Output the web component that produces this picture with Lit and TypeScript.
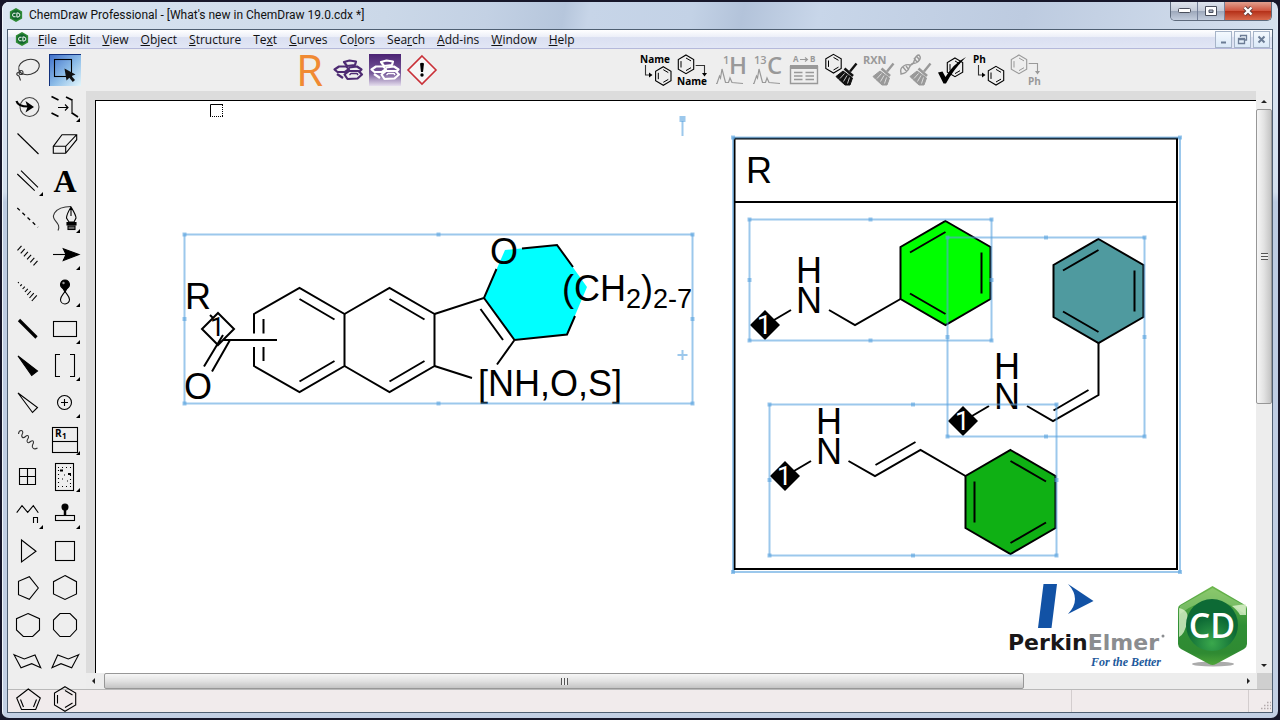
import { LitElement, html, svg, css } from "lit";
import { customElement, property } from "lit/decorators.js";

type Pt = [number, number];

const MENUS: [string, string, string][] = [
  ["", "F", "ile"], ["", "E", "dit"], ["", "V", "iew"], ["", "O", "bject"],
  ["", "S", "tructure"], ["Te", "x", "t"], ["", "C", "urves"], ["Co", "l", "ors"],
  ["Sea", "r", "ch"], ["", "A", "dd-ins"], ["", "W", "indow"], ["", "H", "elp"],
];

const poly = (points: string) => svg`<polygon points=${points} fill="none"/>`;
const line = (points: string) => svg`<polyline points=${points} fill="none"/>`;
const corner = svg`<path d="M31 27v4h-4z" fill="#000" stroke="none"/>`;

const miniRing = (x: number, y: number) => svg`
  <g transform="translate(${x} ${y})" fill="none">
    <path d="M0-9.3L7.7-4.8V4.8L0 9.3L-7.7 4.8V-4.8Z"/>
    <path d="M-5-3.2V3.2M0-6.3L5-3.4M0 6.3L5 3.4" stroke-width="1"/>
  </g>`;

const broom = (c: string) => svg`
  <g stroke=${c} fill="none">
    <path d="M31.500 9.500L25 17.500" stroke-width="2.400"/>
    <path d="M19.500 14.500L28 22" stroke-width="2.600"/>
    <path d="M18 17L11 22.500L14 25.500L20 31L25 31L27.500 24Z" fill=${c} stroke-width="1"/>
    <path d="M19.500 19.500L15 24.500M22 21.500L18.500 27.500M24.500 23.500L22.500 29.500" stroke="#eee" stroke-width=".8"/>
  </g>`;

const hexLogo = (c: string) => svg`
  <g fill="none" stroke=${c} stroke-width="2.200" stroke-linejoin="round">
    <path d="M12 8L17.500 6.500L24 7.500L23 11L15 12Z"/>
    <path d="M2.500 15.500L7 12.500L14 12.500L17 15L13 18L5.500 18Z"/>
    <path d="M17 13.500L25 12.500L29.500 15.500L27 18"/>
    <path d="M12.500 20.500L17 17L26.500 17L30 20.500L25.500 24.500L15.500 25Z"/>
    <path d="M5 20L11 24"/>
    <path d="M17.500 21L19 19.500H25L26 21" stroke-width="1.400"/>
  </g>`;

const peaks = svg`<path d="M2 29.500H3L5.500 22L6.500 24L8 15L11.500 28.500H14.500L16 24L18 28.500L29 29.500" fill="none" stroke="#999" stroke-width="1.200"/>`;

const PALETTE: { name: string; art: unknown; on?: boolean }[] = [
  { name: "Lasso", art: svg`<g fill="none" stroke="#333"><ellipse cx="17" cy="13" rx="10.500" ry="7.500" transform="rotate(-14 17 13)"/><circle cx="9" cy="18.500" r="2"/><path d="M9 18C4 18 3.500 21 7 22L8.500 26.500"/></g>` },
  { name: "Marquee", on: true, art: svg`<rect x="5.500" y="5.500" width="17" height="17" fill="none"/><path d="M15.500 14.500L17.500 26.500L20.300 23.800L23.800 28L26 26L22.500 22L26.500 20.500Z" fill="#111" stroke="none"/>` },
  { name: "Structure perspective", art: svg`<circle cx="17.500" cy="16" r="9.500" fill="none" stroke="#444"/><path d="M4.500 10Q6 15.500 16 15.500" fill="none" stroke-width="2.200"/><path d="M13.500 10L22 16L13.500 21.500L15.500 16Z" stroke="none"/>` },
  { name: "Mass fragmentation", art: svg`<path d="M2.500 5.500L9.500 9M2.500 22L9.500 25.500M17 6L23 9M23 22L29 26" stroke-width="1.700"/><path d="M23 8V23M9 16.500H19M16 13.500L19 16.500L16 19.500" fill="none"/>${corner}` },
  { name: "Solid bond", art: svg`<path d="M5.500 5.500L26.500 26"/>` },
  { name: "Eraser", art: svg`<path d="M4.300 18.300L13 6.700H27.700V11.700L16.700 25.300H4.300ZM4.300 18.300H16.700L27.700 6.700M16.700 18.300V25.300" fill="none"/>` },
  { name: "Multiple bonds", art: svg`<path d="M5.300 9L22.700 25.700M9 5.700L26 22.300"/>${corner}` },
  { name: "Text", art: svg`<text x="16" y="26.500" class="serif" text-anchor="middle">A</text>` },
  { name: "Dashed bond", art: svg`<path d="M5.300 6L26 25.300" stroke-dasharray="3.500 3.500" stroke-width="1.300"/>` },
  { name: "Pen", art: svg`<path d="M9 28.500C13 20 1 19 5.500 11C8.500 6.500 15 4.500 22 4.500" fill="none" stroke="#333"/><path d="M22 5C19 10 17.500 13 17.500 16L20 20H25L27 16C27 13 25 10 22 5ZM22 5V14" fill="#eee"/><path d="M18 20.500H27V23H18Z"/><rect x="19" y="24" width="7" height="3.500" fill="#666"/>${corner}` },
  { name: "Hashed bond", art: svg`${[0, 1, 2, 3, 4, 5].map((i) => svg`<path d="M${5.500 + i * 3.200} ${11.300 + i * 3}l4-4.500"/>`)}` },
  { name: "Arrow", art: svg`<path d="M4 15.500H17"/><path d="M14.300 9.700L30 15.500L14.300 21.500L17 15.500Z"/>${corner}` },
  { name: "Hashed wedge", art: svg`${[0, 1, 2, 3, 4, 5, 6].map((i) => svg`<path d="M${6 + i * 2.300} ${7 + i * 3}l${0.800 + i * 0.700} ${-0.800 - i * 0.800}"/>`)}` },
  { name: "Orbital", art: svg`<circle cx="16" cy="8.500" r="4.500"/><circle cx="14.500" cy="7" r="1.200" fill="#999" stroke="none"/><path d="M14 12.500H18L16 16Z"/><path d="M16 15C15 18 11.500 20 11.500 23.500A4.500 4.500 0 0 0 20.500 23.500C20.500 20 17 18 16 15Z" fill="none"/>${corner}` },
  { name: "Bold bond", art: svg`<path d="M7 7L24.500 24.500" stroke-width="3.200"/>` },
  { name: "Rectangle", art: svg`<rect x="4.500" y="8.500" width="23" height="15" fill="none"/>${corner}` },
  { name: "Bold wedge", art: svg`<path d="M6 6L25.500 21L19.700 25.500Z"/>` },
  { name: "Brackets", art: svg`<path d="M11 4.500H6.500V26.500H11M21 4.500H25.500V26.500H21" fill="none"/>${corner}` },
  { name: "Hollow wedge", art: svg`<path d="M6 6L25.500 20.500L20.500 25.500Z" fill="none"/>` },
  { name: "Charge", art: svg`<circle cx="15.500" cy="15.500" r="7" fill="none"/><path d="M15.500 12V19M12 15.500H19"/>${corner}` },
  { name: "Wavy bond", art: svg`<path d="M6.500 10C7 5 12 6 10.500 9.500C8.500 13 11 15 13.500 12.500C16.500 10 17.500 13 15.500 15.500C14 18 16 20 18.500 17.500C21.500 15.500 22.500 18 20.500 21C19.500 24 22 26 25.500 24" fill="none" stroke="#333"/>` },
  { name: "Table of R groups", art: svg`<rect x="3.500" y="3.500" width="25" height="25" fill="none"/><path d="M3.500 17.500H28.500"/><text x="6" y="13" class="bold10">R</text><text x="13" y="15" class="bold8">1</text>${corner}` },
  { name: "Table", art: svg`<path d="M7.500 7.500H23.500V23.500H7.500ZM15.500 7.500V23.500M7.500 15.500H23.500" fill="none"/>` },
  { name: "TLC plate", art: svg`<rect x="6.500" y="2.500" width="18" height="27" fill="none"/><path d="M9 6.500H23M9 25.500H23M9.500 9V24M21.500 14V24" stroke-dasharray="1 3" fill="none"/><path d="M11 9.500h3M19 13h3" stroke-width="2"/><path d="M13 18h1M18 20h1M15 14h1"/>${corner}` },
  { name: "Acyclic chain", art: svg`${line("4.700,14.700 10,7.700 15.700,14.300 21.300,7.700 26.300,14.700")}<path d="M21.500 25V19.500H25.500V25" fill="none"/>${corner}` },
  { name: "Templates", art: svg`<circle cx="16" cy="9" r="3"/><path d="M16 10V18" stroke-width="2.500"/><rect x="6.500" y="17.500" width="19" height="5" fill="none"/>${corner}` },
  { name: "Cyclopropane ring", art: poly("9.500,5 24,16.300 9.500,27") },
  { name: "Cyclobutane ring", art: svg`<rect x="6.500" y="6.500" width="19" height="19" fill="none"/>` },
  { name: "Cyclopentane ring", art: poly("17.300,4.700 26.300,16 17.300,27.300 6.500,22.700 6.500,9.300") },
  { name: "Cyclohexane ring", art: poly("16,3.500 27.500,9.700 27.500,22 16,27.500 4.500,22 4.500,9.700") },
  { name: "Cycloheptane ring", art: poly("16,4.500 27.500,9.700 27.500,21 20.700,27.500 11.300,27.500 4.500,21 4.500,9.700") },
  { name: "Cyclooctane ring", art: poly("11,4.500 21,4.500 27.500,11 27.500,20.500 21,27.500 11,27.500 4.500,20.500 4.500,11") },
  { name: "Chair", art: poly("2,8.700 12.300,13 23,9 28.700,21.700 19.700,17.700 9,21.700") },
  { name: "Reversed chair", art: poly("29.700,8.700 19.300,13 8.700,9 3,21.700 12,17.700 22.700,21.700") },
  { name: "Cyclopentadiene ring", art: svg`${poly("16.300,6 28.300,15 23.700,26.500 9.500,26.500 4.700,15")}<path d="M8.500 16.500L11.500 24M24.500 16.500L21.500 24"/>` },
  { name: "Benzene ring", art: svg`${poly("16,3.700 26.700,10 26.700,22 16,28.300 5.500,22 5.500,10")}<path d="M8.500 12V20.500M16 7.500L23.500 12M16 24.500L23.500 20"/>` },
];

const ACTIONS: { name: string; art: unknown }[] = [
  { name: "Convert name to structure", art: svg`<text x="0" y="9" class="bold10">Name</text><path d="M5.500 11V21H10" fill="none" stroke="#333"/><path d="M9 18.500L12.500 21L9 23.500Z" stroke="none"/>${miniRing(23.300, 22)}` },
  { name: "Convert structure to name", art: svg`<text x="0" y="31" class="bold10">Name</text>${miniRing(9, 10.300)}<path d="M18.700 11.500H27.500V20" fill="none" stroke="#333"/><path d="M25 19L27.500 22.500L30 19Z" stroke="none"/>` },
  { name: "Predict 1H NMR", art: svg`<text x="9" y="10" class="n12" fill="#999">1</text><text x="15" y="20" class="n24" fill="#999">H</text>${peaks}` },
  { name: "Predict 13C NMR", art: svg`<text x="3" y="10" class="n12" fill="#999">13</text><text x="16" y="20" class="n24" fill="#999">C</text>${peaks}` },
  { name: "Analyze stoichiometry", art: svg`<text x="5" y="8" class="bold8" fill="#999">A</text><text x="22" y="8" class="bold8" fill="#999">B</text><path d="M12 5.500H19M17 3.500L19.500 5.500L17 7.500" fill="none" stroke="#999"/><path d="M2 11H30V15H2Z" fill="#999" stroke="none"/><path d="M2.500 12V29.500H29.500V12M6 18.500H14.500M17.500 18.500H26M6 22H14.500M17.500 22H26M6 25.500H14.500M17.500 25.500H26" fill="none" stroke="#999" stroke-width="1.400"/>` },
  { name: "Clean up structure", art: svg`${miniRing(8.500, 9.700)}${broom("#111")}` },
  { name: "Clean up reaction", art: svg`<text x="1" y="10" class="bold11" fill="#999">RXN</text>${broom("#999")}` },
  { name: "Clean up biopolymer", art: svg`<path d="M2 19C0 12 8 10 11 11C17 11 14 1 20 1C23 4 20 9 14 9.500C9 10 12 19 2 20ZM4 13L8 18M7 12L10 16M15 4L18 8M17.500 2L20.500 6" fill="none" stroke="#999" stroke-width="1.400"/>${broom("#999")}` },
  { name: "Check structure", art: svg`${miniRing(19, 13.300)}<path d="M2 18.500L6.500 17.500L9.500 23Q17 10 30 3Q17 16 10 29.500L7.500 29.500Z" stroke="none"/>` },
  { name: "Expand label", art: svg`<text x="0" y="9" class="bold10">Ph</text><path d="M5.500 11V21H10" fill="none" stroke="#333"/><path d="M9 18.500L12.500 21L9 23.500Z" stroke="none"/>${miniRing(23, 21.700)}` },
  { name: "Contract label", art: svg`<g stroke="#999" fill="#999">${miniRing(9, 10.300)}<path d="M18.700 9.500H27.500V18" fill="none"/><path d="M25 17L27.500 20.500L30 17Z" stroke="none"/><text x="18" y="31" class="bold10">Ph</text></g>` },
];

const GROUPS: { name: string; art: unknown }[] = [
  { name: "Reaxys", art: svg`<text x="1" y="32" class="n44" fill="#f08a33">R</text>` },
  { name: "ChemDraw cloud", art: hexLogo("#4d2a72") },
  { name: "Search cloud", art: svg`<defs><linearGradient id="pg" x1="0" y1="0" x2="0" y2="1"><stop offset="0" stop-color="#4b2373"/><stop offset=".6" stop-color="#76599a"/><stop offset="1" stop-color="#e6dfee"/></linearGradient></defs><rect width="32" height="32" fill="url(#pg)" stroke="none"/>${hexLogo("#fff")}` },
  { name: "Chemical safety", art: svg`<path d="M16 2L30 16L16 30L2 16Z" fill="#f6f6f6" stroke="#c93038" stroke-width="1.600"/><path d="M14 9.500Q16 8 18 9.500L17 18H15Z" stroke="none"/><circle cx="16" cy="21" r="1.700" stroke="none"/>` },
];

const toolCss = css`
  svg { display: block; overflow: visible; }
  .serif { font: bold 32px "Liberation Serif", serif; stroke: none; }
  .bold11 { font: bold 11px "Open Sans", sans-serif; stroke: none; }
  .bold10 { font: bold 10px "Open Sans", sans-serif; stroke: none; }
  .bold8 { font: bold 8px "Open Sans", sans-serif; stroke: none; }
  .n12 { font: 600 11px "Open Sans", sans-serif; stroke: none; }
  .n24 { font: 600 24px "Open Sans", sans-serif; stroke: none; }
  .n44 { font: 44px "Open Sans", sans-serif; stroke: none; }
  .tool {
    width: 32px; height: 32px; flex: none; padding: 0; border: 0;
    background: none; display: block;
  }
  .tool.on {
    background: linear-gradient(to bottom right, #3c6cc8, #8dbde8 55%, #e4f6fb);
    box-shadow: inset 1px 1px 0 #10307c;
  }
`;

const toolButton = (t: { name: string; art: unknown; on?: boolean }) => html`
  <button class="tool ${t.on ? "on" : ""}" aria-label=${t.name}>
    <svg width="32" height="32" viewBox="0 0 32 32" stroke="#000" stroke-width="1.1">${t.art}</svg>
  </button>`;

@customElement("tool-palette")
export class ToolPalette extends LitElement {
  static styles = [toolCss, css`
    :host {
      display: grid; grid-template-columns: 32px 32px; grid-auto-rows: 32px;
      gap: 5px; padding: 5px 5px 0 4px; overflow: hidden;
      background: linear-gradient(to top, #f1ebec 22px, #b9b9b9 22px, #b9b9b9 23px, #eee 23px);
    }
  `];
  render() {
    return html`${PALETTE.map(toolButton)}`;
  }
}

@customElement("action-bar")
export class ActionBar extends LitElement {
  static styles = [toolCss, css`
    :host { display: flex; align-items: center; padding: 0 16px 0 209px; height: 42px; background: #eee; }
    .set { display: flex; gap: 5px; }
    .set + .set { margin-left: 202px; }
  `];
  render() {
    return html`
      <div class="set">${GROUPS.map(toolButton)}</div>
      <div class="set">${ACTIONS.map(toolButton)}</div>`;
  }
}

@customElement("scroll-strip")
export class ScrollStrip extends LitElement {
  @property({ type: Boolean, reflect: true }) horizontal = false;
  @property({ type: Number }) share = 0.5;
  static styles = css`
    :host { display: flex; flex-direction: column; width: 16px; background: #ededed; }
    :host([horizontal]) { flex-direction: row; width: auto; height: 16px; }
    .end { width: 16px; height: 18px; padding: 0; border: 0; background: none; flex: none; }
    :host([horizontal]) .end { width: 18px; height: 16px; }
    .end svg { display: block; }
    .track { flex: 1; display: flex; flex-direction: column; }
    :host([horizontal]) .track { flex-direction: row; }
    .thumb {
      box-sizing: border-box; border: 1px solid #979797; border-radius: 2px;
      background: linear-gradient(to right, #f6f6f6, #e2e2e2 50%, #c4c4c4);
      display: flex; align-items: center; justify-content: center;
    }
    :host([horizontal]) .thumb { background: linear-gradient(#f6f6f6, #e2e2e2 50%, #c4c4c4); }
    .grip { width: 7px; height: 7px; background: repeating-linear-gradient(#555 0 1px, #eee 1px 3px); }
    :host([horizontal]) .grip { background: repeating-linear-gradient(to right, #555 0 1px, #eee 1px 3px); }
  `;
  render() {
    const a = this.horizontal ? "M9 5v6L6 8z" : "M5 11h6L8 8z";
    const b = this.horizontal ? "M8 5v6L11 8z" : "M5 8h6L8 11z";
    return html`
      <button class="end" aria-label="Scroll back"><svg width="16" height="16"><path d=${a} fill="#222"/></svg></button>
      <div class="track"><div class="thumb" style="flex-basis:${this.share * 100}%"><div class="grip"></div></div></div>
      <button class="end" aria-label="Scroll forward"><svg width="16" height="16"><path d=${b} fill="#222"/></svg></button>`;
  }
}

const frame = (x1: number, y1: number, x2: number, y2: number) => {
  const mx = (x1 + x2) / 2;
  const my = (y1 + y2) / 2;
  const spots: Pt[] = [[x1, y1], [mx, y1], [x2, y1], [x1, my], [x2, my], [x1, y2], [mx, y2], [x2, y2]];
  return svg`<g class="sel"><rect x=${x1} y=${y1} width=${x2 - x1} height=${y2 - y1}/>
    ${spots.map(([x, y]) => svg`<rect class="knob" x=${x - 2} y=${y - 2} width="4" height="4"/>`)}</g>`;
};

const hexagon = (cx: number, cy: number, fill: string, inner: string) => svg`
  <g transform="translate(${cx} ${cy})">
    <path d="M0-52L45-26V26L0 52L-45 26V-26Z" fill=${fill}/>
    <path d=${inner}/>
  </g>`;

const attach = (x: number, y: number) => svg`
  <path d="M${x + 9} ${y - 5}L${x + 26} ${y - 15}"/>
  <path d="M${x} ${y - 15}l15 15l-15 15l-15-15z" fill="#000" stroke="none"/>
  <text x=${x - 8} y=${y + 9} class="locant" fill="#fff">1</text>
  <text x=${x + 31} y=${y - 12} class="atom">N</text>
  <text x=${x + 31} y=${y - 42} class="atom">H</text>`;

@customElement("drawing-sheet")
export class DrawingSheet extends LitElement {
  static styles = css`
    :host { display: block; overflow: hidden; background: #fff; }
    svg { display: block; }
    .ink { stroke: #000; stroke-width: 2; fill: none; }
    .atom { font: 36px "Liberation Sans", sans-serif; stroke: none; fill: #000; }
    .sub { font: 27px "Liberation Sans", sans-serif; stroke: none; }
    .locant { font: 26px "Roboto", sans-serif; stroke: none; }
    .sel { fill: none; stroke: #5aa3e0; stroke-opacity: 0.6; stroke-width: 2; }
    .knob { fill: #5aa3e0; fill-opacity: 0.6; stroke: none; }
    .brand { font: bold 22px "DejaVu Sans", sans-serif; }
    .motto { font: italic bold 12px "Liberation Serif", serif; }
    .cd { font: 600 34px "Open Sans", sans-serif; }
  `;
  render() {
    const left = "M-35.500-20.500L0-41M36-20.500V20.500M-35.500 20.500L0 41";
    const right = "M-36-20.500V20.500M0-41L35.500-20.500M0 41L35.500 20.500";
    return html`
      <svg width="1160" height="572" viewBox="96 101 1160 572" role="img" aria-label="Markush structure with R group table">
        <defs>
          <linearGradient id="gem" x1="0" y1="0" x2="0" y2="1">
            <stop offset="0" stop-color="#6fb84e"/><stop offset=".5" stop-color="#2f8f35"/><stop offset=".85" stop-color="#2f8a32"/><stop offset="1" stop-color="#4fa53a"/>
          </linearGradient>
          <radialGradient id="disc" cy=".85"><stop offset="0" stop-color="#3aa84c"/><stop offset="1" stop-color="#0d6a35"/></radialGradient>
        </defs>
        <path d="M223 104.500H210.500V117" fill="none" stroke="#000"/>
        <path d="M210 116.500H223M222.500 105V117" fill="none" stroke="#000" stroke-dasharray="1 1"/>

        <g class="ink">
          <path d="M505 250L557 245L587 287L567 334.500L514.500 340L484 298Z" fill="#0ff" stroke="none"/>
          <path d="M254 333.500V314L299.500 288L344.500 314V366L299.500 392L254 366V347M263.500 319V333.500M263.500 347V361M299.500 299L334.500 319.500M299.500 381.500L334.500 361"/>
          <path d="M344.500 314L389.500 288L434.500 314V366L389.500 392L344.500 366M389.500 299L424.500 319.500M389.500 381.500L424.500 361"/>
          <path d="M434.500 314L484 298L496.500 269M522 248.500L557 245L573 267M575 316L567 334.500L514.500 340L484 298M480.500 309L503 340M514.500 340L497 364.500M434.500 366L472 378"/>
          <path d="M277 340H223M218 313L234 329L218 345L202 329ZM210 315L213 318M223 335L204 366.500M230 340L212 371.500"/>
          <text x="185" y="309" class="atom">R</text>
          <text x="184" y="399" class="atom">O</text>
          <text x="210" y="336" class="locant" fill="#000">1</text>
          <text x="490" y="264" class="atom">O</text>
          <text x="478" y="396" class="atom">[NH,O,S]</text>
          <text x="562" y="301" class="atom">(CH<tspan class="sub" dy="7">2</tspan><tspan dy="-7">)</tspan><tspan class="sub" dy="7">2-7</tspan></text>
        </g>

        <g class="ink">
          <path d="M734.500 138.500H1177V569H734.500ZM734.500 202H1177"/>
          <text x="746" y="183" class="atom">R</text>
          ${hexagon(945.5, 273, "#0f0", left)}
          <path d="M900.500 299L855 325L829 310"/>
          ${attach(765, 325)}
          ${hexagon(1098.5, 291, "#4f9a9f", left)}
          <path d="M1098.500 343V395L1053 421L1027 406M1088.500 390L1053.500 410.500"/>
          ${attach(963, 421)}
          ${hexagon(1010.5, 502, "#0fb014", right)}
          <path d="M965.500 476L920.500 450L875 476L848.500 461M915.500 442L875.500 465"/>
          ${attach(785, 476)}
        </g>

        ${frame(184.5, 234.5, 692.5, 403.5)}
        ${frame(749.5, 219.5, 991.5, 340.5)}
        ${frame(947.5, 237.5, 1144.5, 436.5)}
        ${frame(769.5, 404.5, 1056.5, 555.5)}
        <g class="sel">
          <rect x="733" y="137.500" width="447" height="434.500"/>
          <path d="M682.500 350V360M677.500 355H687.500M682.500 121V136"/>
          <path class="knob" d="M679.500 116h6v6h-6zM731 135.500h4v4h-4zM1178 135.500h4v4h-4zM731 570h4v4h-4zM1178 570h4v4h-4z"/>
        </g>

        <g fill="#1252a5">
          <path d="M1043.500 584H1057L1051.500 628H1038Z"/>
          <path d="M1068 584L1093.500 601L1068 614Q1082 599 1068 584Z"/>
        </g>
        <text x="1008" y="650" class="brand" fill="#1a1718">Perkin<tspan fill="#8b8d90">Elmer</tspan></text>
        <circle cx="1163" cy="636" r="1.500" fill="#8b8d90"/>
        <text x="1091" y="666" class="motto" fill="#1d5a9c">For the Better</text>

        <ellipse cx="1213" cy="664" rx="21" ry="2.500" fill="#888" opacity=".7"/>
        <path d="M1212.500 586L1245 605Q1247 606 1247 609V644Q1247 647 1244 649L1216 664Q1212.500 666 1209 664L1181 649Q1178 647 1178 644V609Q1178 606 1180 605Z" fill="url(#gem)"/>
        <path d="M1212.500 588L1245 606V614Q1212 588 1180 614V606Z" fill="#b9e39a" opacity=".4"/>
        <path d="M1179 608Q1190 610 1187 622Q1185 634 1179 637ZM1246 604L1232 606Q1239 612 1240 615H1246Z" fill="#e5f7d6" opacity=".75"/>
        <circle cx="1212" cy="625" r="26" fill="url(#disc)"/>
        <text x="1212" y="638" class="cd" fill="#fff" text-anchor="middle">CD</text>
      </svg>`;
  }
}

const badge = (size: number) => html`
  <svg class="badge" width=${size} height=${size} viewBox="0 0 16 16" aria-hidden="true">
    <path d="M8 0L15 4V12L8 16L1 12V4Z" fill="#2d8a34"/><circle cx="8" cy="8" r="5.500" fill="#11652f"/>
    <path d="M7.500 6Q4 5 4 8Q4 11 7.500 10M9 5.500V10.500Q12.500 10.500 12.500 8Q12.500 5.500 9 5.500" fill="none" stroke="#fff" stroke-width="1.100"/>
  </svg>`;

@customElement("app-root")
export class AppRoot extends LitElement {
  static styles = css`
    :host {
      display: flex; box-sizing: border-box; height: 100vh; padding: 2px; background: #17172a;
      font-family: "Roboto", "Open Sans", sans-serif; color: #111;
    }
    svg { display: block; }
    .window {
      flex: 1; min-width: 0; display: flex; flex-direction: column; padding: 0 6px 6px;
      border-radius: 7px; background: linear-gradient(#dce7f4, #d3dfee 190px, #bccbe2 200px, #c3d0e4);
      box-shadow: inset 1px 1px 0 #f2f7fc;
    }
    .title {
      display: flex; align-items: flex-start; height: 28px; flex: none; margin: 0 -5px; padding-left: 6px;
      background: linear-gradient(100deg, #dbe6f2 0, #cbd8e8 30%, #c3d1e4 38%, #b6c6dc 44%, #c7d5e8 46%, #c3d2e6 54%, #b3c3da 58%, #c8d6e9 64%, #bdcbe0 80%, #d5e0ee);
      border-radius: 6px 6px 0 0;
    }
    .name { display: flex; align-items: center; gap: 6px; height: 26px; flex: 1; margin: 0; font-size: 12px; font-weight: 400; }
    .caption { display: flex; height: 18px; border: 1px solid #5e6a7c; border-top: 0; border-radius: 0 0 5px 5px; overflow: hidden; margin-right: 5px; }
    .cap {
      width: 27px; padding: 0; border: 0; border-right: 1px solid #75819a; display: flex; align-items: center; justify-content: center;
      background: linear-gradient(#dde3ec, #c4cbd8 48%, #9ca7ba 50%, #c3cddd);
    }
    .close { width: 46px; border: 0; background: linear-gradient(#e2a08f, #d0553f 48%, #b42f17 50%, #d8694c); }
    .content { flex: 1; min-height: 0; display: flex; flex-direction: column; box-shadow: 0 0 0 1px #4f5f72; background: #eee; }
    .menubar {
      display: flex; align-items: center; height: 18px; flex: none; border-bottom: 1px solid #b5b9da; padding: 0 2px 0 7px;
      background: linear-gradient(#fff, #eceff8 38%, #dbe0f1 42%, #e1e6f5);
    }
    .menus { display: flex; gap: 12px; flex: 1; padding: 2px 0 0 9px; }
    .menu { padding: 0; border: 0; background: none; font: 12px/18px "Open Sans", sans-serif; color: #111; }
    .mdi { display: flex; gap: 2px; }
    .mini { width: 17px; height: 17px; padding: 0; border: 1px solid #a6b4c8; background: linear-gradient(#f4f9fe, #dbe9f8); display: flex; align-items: center; justify-content: center; }
    .body { flex: 1; min-height: 0; display: flex; }
    tool-palette { flex: none; width: 69px; }
    .main { flex: 1; min-width: 0; display: flex; flex-direction: column; }
    .desk { flex: 1; min-height: 0; display: flex; }
    .ruled { flex: 1; min-width: 0; display: flex; padding: 9px 0 0 9px; background: #dcdcdc; }
    drawing-sheet { flex: 1; min-width: 0; border-top: 1px solid #000; border-left: 1px solid #000; }
    .bottom { display: flex; flex: none; }
    .bottom scroll-strip { flex: 1; }
    .nook { width: 15px; background: #cfcfcf; }
    .status { height: 22px; flex: none; border-top: 1px solid #b9b9b9; display: flex; justify-content: flex-end; background: #f1ebec; }
    .cell { width: 176px; border-left: 1px solid #d3cdce; }
    .grip { width: 24px; border-left: 1px solid #d3cdce; display: flex; align-items: flex-end; justify-content: flex-end; padding-bottom: 2px; box-sizing: border-box; }
  `;
  render() {
    return html`
      <div class="window">
        <header class="title">
          <h1 class="name">${badge(14)}<span>ChemDraw Professional - [What's new in ChemDraw 19.0.cdx *]</span></h1>
          <div class="caption">
            <button class="cap" aria-label="Minimize"><svg width="13" height="6"><rect x=".5" y=".5" width="12" height="4" rx="1" fill="#fff" stroke="#4a4f5c"/></svg></button>
            <button class="cap" aria-label="Maximize"><svg width="12" height="10"><path d="M.5.500H11.500V9.500H.5ZM4 4V6.500H8V4Z" fill="#fff" fill-rule="evenodd" stroke="#4a4f5c"/></svg></button>
            <button class="cap close" aria-label="Close"><svg width="12" height="10"><path d="M2.500 1.500L9.500 8.500M9.500 1.500L2.500 8.500" stroke="#5c3a3a" stroke-width="4"/><path d="M2.500 1.500L9.500 8.500M9.500 1.500L2.500 8.500" stroke="#fff" stroke-width="2.400"/></svg></button>
          </div>
        </header>
        <div class="content">
          <nav class="menubar">
            ${badge(14)}
            <div class="menus">${MENUS.map(([a, k, b]) => html`<button class="menu">${a}<u>${k}</u>${b}</button>`)}</div>
            <div class="mdi">
              <button class="mini" aria-label="Minimize document"><svg width="11" height="11"><path d="M3 8.500H8" stroke="#6b7c95" stroke-width="2"/></svg></button>
              <button class="mini" aria-label="Restore document"><svg width="11" height="11"><path d="M3.500 3V1.500H9.500V6H8M1.500 4.500H7.500V9.500H1.500ZM1.500 5.500H7.500" fill="none" stroke="#6b7c95" stroke-width="1.300"/></svg></button>
              <button class="mini" aria-label="Close document"><svg width="11" height="11"><path d="M2.500 2.500L8.500 8.500M8.500 2.500L2.500 8.500" stroke="#6b7c95" stroke-width="2"/></svg></button>
            </div>
          </nav>
          <div class="body">
            <tool-palette></tool-palette>
            <div class="main">
              <action-bar></action-bar>
              <div class="desk">
                <div class="ruled"><drawing-sheet></drawing-sheet></div>
                <scroll-strip .share=${0.54}></scroll-strip>
              </div>
              <div class="bottom"><scroll-strip horizontal .share=${0.811}></scroll-strip><div class="nook"></div></div>
              <footer class="status">
                <div class="cell"></div>
                <div class="grip"><svg width="12" height="12"><path d="M1 10.500H11M4 7.500H11M7 4.500H11" stroke="#b3aaab" stroke-width="1.500" stroke-dasharray="1.500 1.500"/></svg></div>
              </footer>
            </div>
          </div>
        </div>
      </div>`;
  }
}
